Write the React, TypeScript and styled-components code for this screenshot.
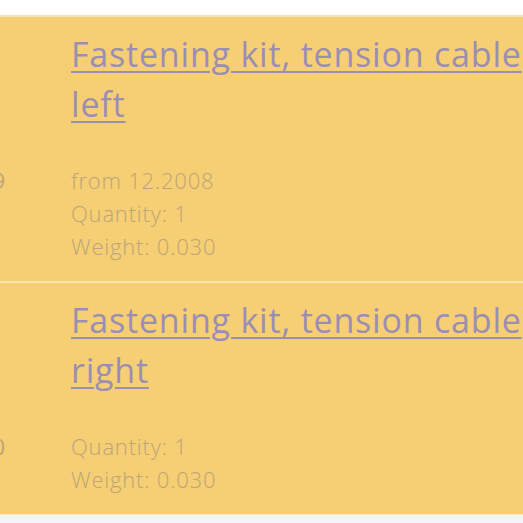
import React from "react";
import styled, {createGlobalStyle} from "styled-components";

const GlobalStyle = createGlobalStyle`
    html, body {
        margin: 0;
        padding: 0;
        background: #f3f6f9;
        overflow: hidden;
    }
    body {
        font-family: "Open Sans", "Liberation Sans", sans-serif;
    }
`;

const Page = styled.div`
    background: #ffffff;
    padding-top: 15px;
    overflow: hidden;
    width: 523px;
`;

const Table = styled.div`
    display: flex;
    flex-direction: column;
    margin-left: -54px;
    border-top: 2px solid #f2e4bd;
    border-bottom: 1px solid #f8e7c4;
`;

const Row = styled.div<{ last?: boolean }>`
    display: grid;
    grid-template-columns: 60px 1fr;
    grid-template-areas:
        ".    title"
        "code details";
    column-gap: 65px;
    row-gap: 35px;
    background: #f6ce74;
    padding: 12px 0 18px;
    border-bottom: ${p => (p.last ? "none" : "2px solid #fbe6ae")};
`;

const Code = styled.div`
    grid-area: code;
    color: #bba57a;
    font-size: 22px;
    letter-spacing: 0.8px;
    line-height: 33px;
    text-align: right;
    white-space: nowrap;
    overflow: hidden;
    direction: rtl;
`;

const Title = styled.a`
    grid-area: title;
    min-width: 0;
    color: #9a8fb3;
    font-size: 34px;
    letter-spacing: 0.8px;
    line-height: 50px;
    text-decoration: underline;
    text-decoration-thickness: 2px;
    text-underline-offset: 4px;
    margin-right: -30px;
`;

const Details = styled.ul`
    grid-area: details;
    list-style: none;
    margin: 0;
    padding: 0;
`;

const Detail = styled.li`
    color: #bba57a;
    font-size: 22px;
    font-weight: 300;
    letter-spacing: 0.8px;
    line-height: 33px;
`;

type Part = {
    code: string;
    title: string;
    details: string[];
};

const parts: Part[] = [
    {
        code: "7L0 807 309",
        title: "Fastening kit, tension cable left",
        details: ["from 12.2008", "Quantity: 1", "Weight: 0.030"],
    },
    {
        code: "7L0 807 310",
        title: "Fastening kit, tension cable right",
        details: ["Quantity: 1", "Weight: 0.030"],
    },
];

const App: React.FC = () => {
    return (
        <Page>
            <GlobalStyle/>
            <Table>
                {parts.map((part, i) => (
                    <Row key={part.code} last={i === parts.length - 1}>
                        <Title href="#">{part.title}</Title>
                        <Code>{part.code}</Code>
                        <Details>
                            {part.details.map(d => (
                                <Detail key={d}>{d}</Detail>
                            ))}
                        </Details>
                    </Row>
                ))}
            </Table>
        </Page>
    );
};

export default App;
